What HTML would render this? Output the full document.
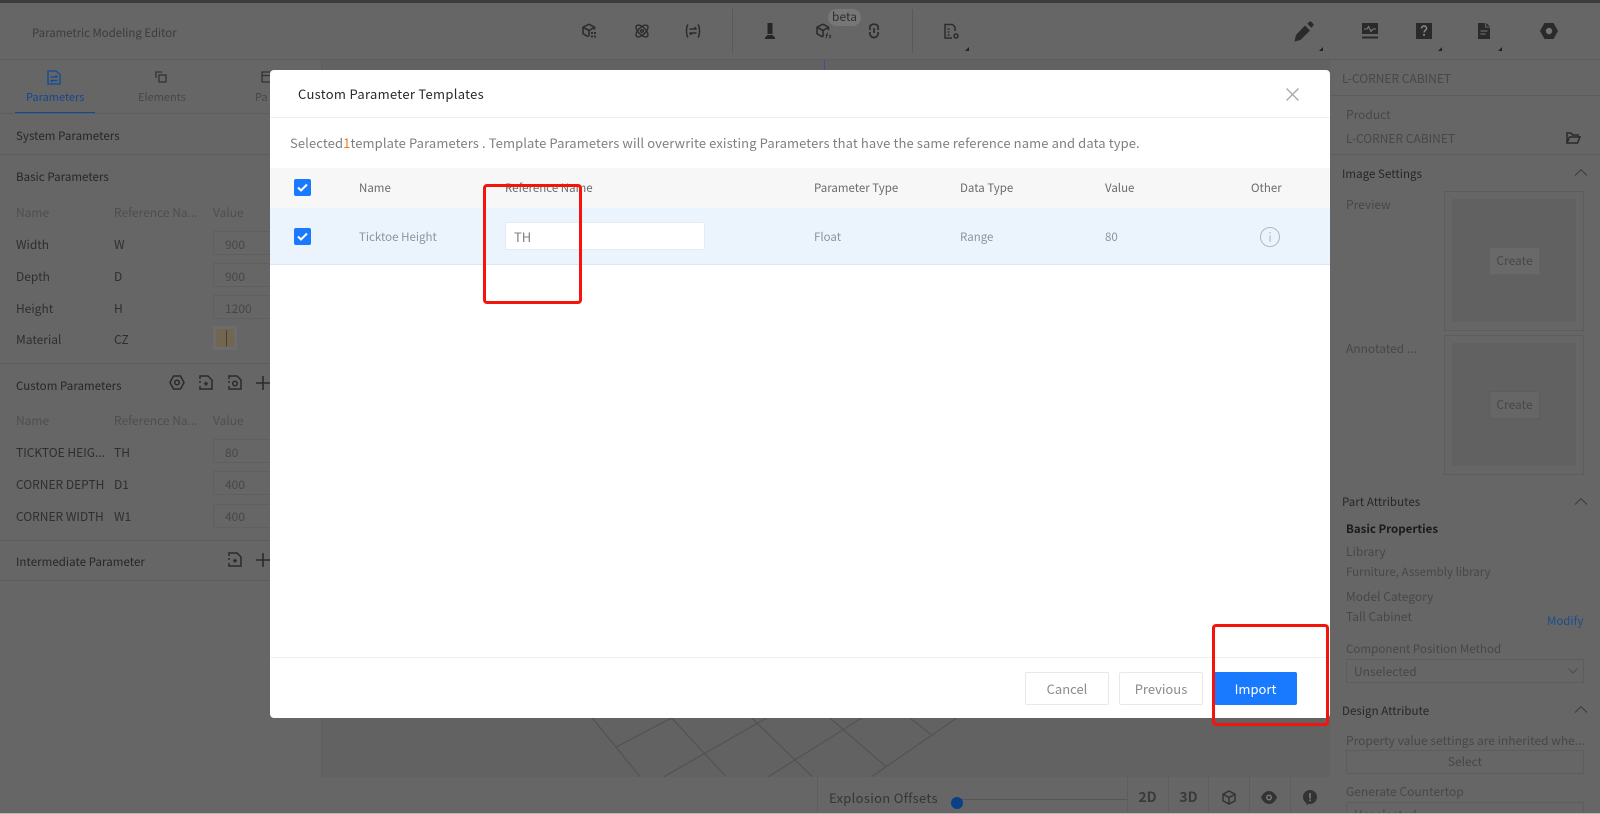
<!DOCTYPE html>
<html><head><meta charset="utf-8"><title>Custom Parameter Templates</title>
<style>
html,body{margin:0;padding:0;width:1600px;height:814px;overflow:hidden;background:#626262}
body{position:relative;font-family:"Noto Sans CJK SC","Liberation Sans",sans-serif;font-size:12px;color:#2e2e2e}
.a{position:absolute}
.t{position:absolute;line-height:20px;height:20px;white-space:nowrap;margin-top:1px}
.h{font-size:11.5px;color:#262626;letter-spacing:.05px}
.g{color:#474747}
.l{position:absolute;height:1px;background:#5d5d5d}
.v{position:absolute;width:1px;background:#595959}
.in{position:absolute;left:213px;width:60px;height:22px;border:1px solid #5f5f5f;border-radius:2px}
.box{position:absolute;border:1px solid #5d5d5d;box-sizing:border-box}
svg{position:absolute;overflow:visible}
.btn{position:absolute;box-sizing:border-box;border:1px solid #e8e8e8;border-radius:2px;background:#fff;color:#8a8a8a;font-size:13px;text-align:center;line-height:32px;height:33px;top:672px}
.m{color:#7f7f7f;font-size:11.5px;margin-top:0}
.z{margin-top:0}
.tri{position:absolute;width:0;height:0;border-left:4px solid transparent;border-bottom:4px solid #222}
</style></head><body>
<div class="a" style="left:0;top:0;width:1600px;height:3px;background:#3b3b40"></div>
<div class="a" style="left:0;top:3px;width:1600px;height:57px;background:#666"></div>
<div class="l" style="left:0;top:59px;width:1600px"></div>
<div class="t" style="left:32px;top:22px;font-size:11.4px;color:#3c3c3c">Parametric Modeling Editor</div>

<div class="a" style="left:824px;top:60px;width:1px;height:12px;background:#4a4a92"></div>
<div class="v" style="left:732px;top:9px;height:44px"></div>
<div class="v" style="left:912px;top:9px;height:44px"></div>

<svg style="left:581px;top:23px" width="16" height="16" viewBox="0 0 16 16" fill="none" stroke="#2c2c2c" stroke-width="1.6"><path d="M8 1.200 2 4.200v6.500l5 3M8 1.200l5.500 3v2.600M2.300 4.500 8 7.500l5-3M8 7.500v6"/><path d="M10 9h2v2h-2zM13 9h2v2h-2zM10 12.500h2v2h-2zM13 12.500h2v2h-2z" fill="#2c2c2c" stroke="none"/></svg>
<svg style="left:634px;top:23px" width="16" height="16" viewBox="0 0 16 16" fill="none" stroke="#2c2c2c" stroke-width="1.400"><ellipse cx="8" cy="8" rx="3.600" ry="7.600" transform="rotate(45 8 8)"/><ellipse cx="8" cy="8" rx="3.600" ry="7.600" transform="rotate(-45 8 8)"/><circle cx="8" cy="8" r="1.300"/></svg>
<svg style="left:685px;top:23px" width="16" height="16" viewBox="0 0 16 16" fill="none" stroke="#2c2c2c" stroke-width="1.500"><path d="M3 1.500C1 4 1 12 3 14.500M13 1.500c2 2.500 2 10.500 0 13M4.500 6h7M9.500 4l2 2M11.500 10h-7M6.500 12l-2-2"/></svg>
<svg style="left:762px;top:22px" width="16" height="18" viewBox="0 0 16 18"><path d="M5.500 1h5v11H5.500zM5.500 13h5l2.500 2.500V17H3v-1.500z" fill="#262626"/></svg>

<div class="a" style="left:828px;top:9px;width:33px;height:17px;border-radius:9px;background:#777;color:#2e2e2e;text-align:center;line-height:16px;font-size:12px">beta</div>
<svg style="left:815px;top:23px" width="17" height="17" viewBox="0 0 17 17" fill="none" stroke="#2c2c2c" stroke-width="1.600"><path d="M8 1.200 2 4.200v6.500l5.500 3.300M8 1.200l5.500 3v3M2.300 4.500 8 7.500l5-3M8 7.500v6.500"/><path d="M10.500 15c1.500 0 .8-5 2.500-5M10.500 12h2.500M14 12l2 3M16 12l-2 3" stroke-width=".9"/></svg>
<svg style="left:866px;top:22px" width="16" height="18" viewBox="0 0 16 18" fill="none" stroke="#2c2c2c" stroke-width="1.700"><path d="M6 2.500C4 3 3.800 5 3.800 6.500M10 2.500c2 .5 2.200 2.500 2.200 4M3.800 11c0 2.500 1.700 4.500 4.200 4.500s4.200-2 4.200-4.500M8 6v5M3.800 6.500v1.500M12.200 6.500v1.500M3.800 10v1.500M12.200 10v1.500M6 2.300h4"/></svg>
<svg style="left:943px;top:23px" width="17" height="17" viewBox="0 0 17 17" fill="none" stroke="#2c2c2c" stroke-width="1.500"><path d="M9 15H2V1.500h7.500L12 4v4"/><path d="M4.500 6h2M4.500 9h2M4.500 12h2"/><circle cx="13" cy="13" r="2"/></svg>
<div class="tri" style="left:965px;top:47px"></div>

<svg style="left:1293px;top:21px" width="22" height="22" viewBox="0 0 22 22"><path d="M1.500 20.500l1.500-6.500L12 4.500l5 5-9.500 9.500z" fill="#2a2a2a"/><path d="M14.300 2.800l2-2c.6-.6 1.300-.6 1.900 0l2 2c.6.6.6 1.300 0 1.900l-2 2z" fill="#2a2a2a"/></svg>
<div class="tri" style="left:1319px;top:47px"></div>
<svg style="left:1362px;top:23px" width="16" height="17" viewBox="0 0 16 17"><path d="M0 0h16v11H0z" fill="#2a2a2a"/><path d="M0 13.500h16v2H0z" fill="#2a2a2a"/><path d="M2 6h3l1.500-2.500 2.500 5L11 6h3" fill="none" stroke="#7a7a7a" stroke-width="1.100"/></svg>
<svg style="left:1416px;top:23px" width="16" height="16" viewBox="0 0 16 16"><path d="M0 0h16v16H0z" fill="#2a2a2a"/><path d="M5.500 5.500C5.500 3.800 6.800 3 8 3s2.600.8 2.600 2.300C10.600 7.300 8 7.300 8 9.500" fill="none" stroke="#8a8a8a" stroke-width="1.500"/><rect x="7.200" y="11" width="1.700" height="1.800" fill="#8a8a8a"/></svg>
<div class="tri" style="left:1438px;top:47px"></div>
<svg style="left:1478px;top:23px" width="12" height="16" viewBox="0 0 12 16"><path d="M0 0h7v4.500h5V16H0z" fill="#2a2a2a"/><path d="M8 0l4 3.500H8z" fill="#2a2a2a"/><path d="M2.500 8h7M2.500 11h5" stroke="#777" stroke-width="1"/></svg>
<div class="tri" style="left:1498px;top:47px"></div>
<svg style="left:1540px;top:23px" width="18" height="16" viewBox="0 0 18 16"><path d="M4.500 0h9L18 8l-4.500 8h-9L0 8z" fill="#2a2a2a"/><circle cx="9" cy="8" r="3.200" fill="#747474"/></svg>

<!-- left panel -->
<div class="a" style="left:0;top:60px;width:322px;height:754px;background:#666"></div>
<div class="v" style="left:321px;top:60px;height:717px;background:#5e5e5e"></div>
<svg style="left:47px;top:70px" width="14" height="15" viewBox="0 0 14 15" fill="none" stroke="#0f4a99" stroke-width="1.300"><path d="M1 1h8l4 3.500V14H1z"/><path d="M3.500 7h7M8.500 5.500 10.500 7M10.500 10.500h-7M5.500 12l-2-1.500"/></svg>
<svg style="left:155px;top:71px" width="12" height="12" viewBox="0 0 12 12" fill="none" stroke="#333" stroke-width="1.300"><path d="M1 7V1h6"/><rect x="4" y="4" width="7" height="7"/></svg>
<svg style="left:261px;top:71px" width="9" height="12" viewBox="0 0 9 12" fill="none" stroke="#333" stroke-width="1.300"><path d="M9 1H1v10h8M1 4.500h8"/></svg>
<div class="t z" style="left:26px;top:87px;color:#12478f;font-size:11px">Parameters</div>
<div class="t g z" style="left:138px;top:87px;font-size:11px">Elements</div>
<div class="t g z" style="left:255px;top:87px;font-size:11px">Pa</div>
<div class="a" style="left:15px;top:112px;width:80px;height:2px;background:#0f4a99"></div>
<div class="l" style="left:0;top:113px;width:322px"></div>
<div class="t h" style="left:16px;top:125px">System Parameters</div>
<div class="l" style="left:0;top:154px;width:322px"></div>
<div class="t h" style="left:16px;top:166px">Basic Parameters</div>
<div class="t" style="left:16px;top:202px;color:#4e4e4e">Name</div>
<div class="t" style="left:114px;top:202px;color:#4e4e4e">Reference Na...</div>
<div class="t" style="left:213px;top:202px;color:#4e4e4e">Value</div>
<div class="t" style="left:16px;top:234px">Width</div><div class="t" style="left:114px;top:234px">W</div><div class="in" style="top:231px"></div><div class="t g" style="left:225px;top:234px">900</div>
<div class="t" style="left:16px;top:266px">Depth</div><div class="t" style="left:114px;top:266px">D</div><div class="in" style="top:263px"></div><div class="t g" style="left:225px;top:266px">900</div>
<div class="t" style="left:16px;top:298px">Height</div><div class="t" style="left:114px;top:298px">H</div><div class="in" style="top:295px"></div><div class="t g" style="left:225px;top:298px">1200</div>
<div class="t" style="left:16px;top:329px">Material</div><div class="t" style="left:114px;top:329px">CZ</div>
<div class="box" style="left:213px;top:326px;width:24px;height:24px;background:#736650;border:3px solid #6c6c6c"></div>
<div class="a" style="left:226px;top:330px;width:1px;height:16px;background:#4a3f2e"></div>
<div class="l" style="left:0;top:363px;width:322px"></div>
<div class="t h" style="left:16px;top:375px">Custom Parameters</div>
<svg style="left:169px;top:375px" width="16" height="15" viewBox="0 0 16 15" fill="none" stroke="#2a2a2a" stroke-width="1.500"><path d="M4.500 1h7L15 7.500 11.500 14h-7L1 7.500z"/><circle cx="8" cy="7.500" r="2.300"/></svg>
<svg style="left:199px;top:375px" width="14" height="15" viewBox="0 0 14 15" fill="none" stroke="#2a2a2a" stroke-width="1.500"><path d="M1 4V1h8l4 4v9H1v-3M1 6v2"/><path d="M7 6l.8 1.700 1.700.2-1.300 1.200.4 1.800L7 10l-1.600.9.4-1.800L4.500 7.900l1.700-.2z" fill="#2a2a2a" stroke="none"/></svg>
<svg style="left:228px;top:375px" width="14" height="15" viewBox="0 0 14 15" fill="none" stroke="#2a2a2a" stroke-width="1.500"><path d="M1 4V1h8l4 4v9H1v-3M1 6v2"/><circle cx="7" cy="8.500" r="2.300"/></svg>
<svg style="left:256px;top:376px" width="14" height="14" viewBox="0 0 14 14" stroke="#2a2a2a" stroke-width="1.600"><path d="M0 7h14M7 0v14"/></svg>
<div class="t" style="left:16px;top:410px;color:#4e4e4e">Name</div>
<div class="t" style="left:114px;top:410px;color:#4e4e4e">Reference Na...</div>
<div class="t" style="left:213px;top:410px;color:#4e4e4e">Value</div>
<div class="t" style="left:16px;top:442px">TICKTOE HEIG...</div><div class="t" style="left:114px;top:442px">TH</div><div class="in" style="top:439px"></div><div class="t g" style="left:225px;top:442px">80</div>
<div class="t" style="left:16px;top:474px">CORNER DEPTH</div><div class="t" style="left:114px;top:474px">D1</div><div class="in" style="top:471px"></div><div class="t g" style="left:225px;top:474px">400</div>
<div class="t" style="left:16px;top:506px">CORNER WIDTH</div><div class="t" style="left:114px;top:506px">W1</div><div class="in" style="top:504px"></div><div class="t g" style="left:225px;top:506px">400</div>
<div class="l" style="left:0;top:540px;width:322px"></div>
<div class="t h" style="left:16px;top:551px">Intermediate Parameter</div>
<svg style="left:228px;top:552px" width="14" height="15" viewBox="0 0 14 15" fill="none" stroke="#2a2a2a" stroke-width="1.500"><path d="M1 4V1h8l4 4v9H1v-3M1 6v2"/><path d="M7 6l.8 1.700 1.700.2-1.300 1.200.4 1.800L7 10l-1.600.9.4-1.800L4.500 7.900l1.700-.2z" fill="#2a2a2a" stroke="none"/></svg>
<svg style="left:256px;top:553px" width="14" height="14" viewBox="0 0 14 14" stroke="#2a2a2a" stroke-width="1.600"><path d="M0 7h14M7 0v14"/></svg>
<div class="l" style="left:0;top:580px;width:322px"></div>

<!-- canvas grid -->
<svg style="left:560px;top:700px" width="500" height="77" viewBox="0 0 1500 231" fill="none" stroke="#505050" stroke-width="3">
<path d="M97 54 240 230M170 140 335 54M335 54 498 230M312 230 620 54M575 54 757 230M625 230 905 54M810 54 978 200M935 230 1190 54M1050 54 1115 105"/></svg>

<!-- bottom toolbar -->
<div class="a" style="left:322px;top:777px;width:1008px;height:36px;background:#666"></div>
<div class="v" style="left:817px;top:777px;height:36px;background:#5e5e5e"></div>
<div class="t z" style="left:829px;top:788px;font-size:13px;color:#353535;letter-spacing:.3px">Explosion Offsets</div>
<div class="a" style="left:957px;top:799px;width:170px;height:1px;background:#565656"></div>
<div class="a" style="left:951px;top:797px;width:12px;height:12px;border-radius:50%;background:#0b3f86"></div>
<div class="v" style="left:1127px;top:777px;height:36px;background:#5e5e5e"></div><div class="v" style="left:1168px;top:777px;height:36px;background:#5e5e5e"></div><div class="v" style="left:1208px;top:777px;height:36px;background:#5e5e5e"></div><div class="v" style="left:1249px;top:777px;height:36px;background:#5e5e5e"></div><div class="v" style="left:1290px;top:777px;height:36px;background:#5e5e5e"></div>
<div class="t z" style="left:1127px;width:41px;top:787px;text-align:center;font-size:14px;font-weight:700;color:#3a3a3a">2D</div>
<div class="t z" style="left:1168px;width:41px;top:787px;text-align:center;font-size:14px;font-weight:700;color:#3a3a3a">3D</div>
<svg style="left:1222px;top:790px" width="14" height="15" viewBox="0 0 14 15" fill="none" stroke="#333" stroke-width="1.500"><path d="M7 1 1 4.200v6.600L7 14l6-3.200V4.200zM1.300 4.400 7 7.500l5.700-3.100M7 7.500V14"/></svg>
<svg style="left:1261px;top:791px" width="16" height="13" viewBox="0 0 16 13"><path d="M0 6.500C2 2 5 0 8 0s6 2 8 6.500C14 11 11 13 8 13s-6-2-8-6.500z" fill="#333"/><circle cx="8" cy="6.500" r="3" fill="#777"/><circle cx="8" cy="6.500" r="1.500" fill="#333"/></svg>
<svg style="left:1303px;top:790px" width="14" height="15" viewBox="0 0 14 15"><circle cx="7" cy="7" r="7" fill="#333"/><path d="M4 12l-1 3 4-1.500z" fill="#333"/><rect x="6.200" y="3" width="1.600" height="5.500" fill="#777"/><rect x="6.200" y="9.500" width="1.600" height="1.700" fill="#777"/></svg>

<!-- right panel -->
<div class="a" style="left:1330px;top:60px;width:270px;height:753px;background:#666"></div>
<div class="t g" style="left:1342px;top:68px">L-CORNER CABINET</div>
<div class="l" style="left:1330px;top:95px;width:270px"></div>
<div class="t g" style="left:1346px;top:104px">Product</div>
<div class="t g" style="left:1346px;top:128px">L-CORNER CABINET</div>
<svg style="left:1566px;top:132px" width="14" height="12" viewBox="0 0 14 12" fill="none" stroke="#2a2a2a" stroke-width="1.500"><path d="M1 11V1h4l1.500 2H12v2M1 11l2.500-6H14l-2.500 6z"/></svg>
<div class="l" style="left:1330px;top:154px;width:270px"></div>
<div class="t h" style="left:1342px;top:163px">Image Settings</div>
<svg style="left:1575px;top:169px" width="12" height="7" viewBox="0 0 12 7" fill="none" stroke="#3a3a3a" stroke-width="1"><path d="M0 6.500 6 .7l6 5.800"/></svg>
<div class="t g" style="left:1346px;top:194px">Preview</div>
<div class="box" style="left:1444px;top:191px;width:140px;height:140px"></div>
<div class="a" style="left:1452px;top:199px;width:124px;height:123px;background:#616161"></div>
<div class="box" style="left:1489px;top:247px;width:51px;height:28px;background:#696969;border-color:#636363;text-align:center;line-height:26px;color:#474747">Create</div>
<div class="t g" style="left:1346px;top:338px">Annotated ...</div>
<div class="box" style="left:1444px;top:335px;width:140px;height:140px"></div>
<div class="a" style="left:1452px;top:343px;width:124px;height:123px;background:#616161"></div>
<div class="box" style="left:1489px;top:391px;width:51px;height:28px;background:#666;border-color:#5d5d5d;text-align:center;line-height:26px;color:#474747">Create</div>
<div class="t h" style="left:1342px;top:491px">Part Attributes</div>
<svg style="left:1575px;top:498px" width="12" height="7" viewBox="0 0 12 7" fill="none" stroke="#3a3a3a" stroke-width="1"><path d="M0 6.500 6 .7l6 5.800"/></svg>
<div class="t" style="left:1346px;top:518px;font-weight:700;color:#1a1a1a;font-size:11.5px">Basic Properties</div>
<div class="t g" style="left:1346px;top:541px">Library</div>
<div class="t g" style="left:1346px;top:561px;font-size:11.5px">Furniture, Assembly library</div>
<div class="t g" style="left:1346px;top:586px">Model Category</div>
<div class="t g" style="left:1346px;top:606px">Tall Cabinet</div>
<div class="t" style="left:1547px;top:610px;color:#1c4c8f;font-size:11.5px">Modify</div>
<div class="t g" style="left:1346px;top:638px;font-size:11.6px">Component Position Method</div>
<div class="box" style="left:1346px;top:659px;width:238px;height:24px"></div>
<div class="t g" style="left:1354px;top:661px">Unselected</div>
<svg style="left:1568px;top:668px" width="10" height="6" viewBox="0 0 10 6" fill="none" stroke="#4c4c4c"><path d="M.5.500 5 5 9.500.5"/></svg>
<div class="t h" style="left:1342px;top:700px">Design Attribute</div>
<svg style="left:1575px;top:706px" width="12" height="7" viewBox="0 0 12 7" fill="none" stroke="#3a3a3a" stroke-width="1"><path d="M0 6.500 6 .7l6 5.800"/></svg>
<div class="t g" style="left:1346px;top:730px">Property value settings are inherited whe...</div>
<div class="box" style="left:1346px;top:750px;width:238px;height:24px;text-align:center;line-height:22px;color:#474747">Select</div>
<div class="t g" style="left:1346px;top:781px">Generate Countertop</div>
<div class="box" style="left:1346px;top:802px;width:238px;height:24px"></div>
<div class="t g" style="left:1354px;top:804px">Unselected</div>
<div class="a" style="left:0;top:813px;width:1600px;height:1px;background:#b5b5b5"></div>

<!-- modal -->
<div class="a" style="left:270px;top:70px;width:1060px;height:648px;background:#fff;border-radius:4px"></div>
<div class="t z" style="left:298px;top:84px;font-size:13px;color:#2a2a2a;letter-spacing:.3px">Custom Parameter Templates</div>
<svg style="left:1286px;top:88px" width="13" height="13" viewBox="0 0 13 13" stroke="#a8a8a8" stroke-width="1.300"><path d="M.5.500l12 12M12.500.500l-12 12"/></svg>
<div class="a" style="left:270px;top:117px;width:1060px;height:1px;background:#f0f0f0"></div>
<div class="t z" style="left:290px;top:133px;font-size:13px;color:#808080;letter-spacing:.1px">Selected<span style="color:#f07a1a">1</span>template Parameters . Template Parameters will overwrite existing Parameters that have the same reference name and data type.</div>

<div class="a" style="left:270px;top:168px;width:1060px;height:40px;background:#f7f7f7"></div>
<div class="a" style="left:270px;top:208px;width:1060px;height:56px;background:#ebf3fd;border-bottom:1px solid #dde7f3"></div>
<div class="a" style="left:294px;top:179px;width:17px;height:17px;background:#1a7aff;border-radius:2px"></div>
<svg style="left:297px;top:183px" width="11" height="9" viewBox="0 0 11 9" fill="none" stroke="#fff" stroke-width="2"><path d="M1 4.500 4 7.500l6-6"/></svg>
<div class="a" style="left:294px;top:228px;width:17px;height:17px;background:#1a7aff;border-radius:2px"></div>
<svg style="left:297px;top:232px" width="11" height="9" viewBox="0 0 11 9" fill="none" stroke="#fff" stroke-width="2"><path d="M1 4.500 4 7.500l6-6"/></svg>
<div class="t m" style="left:359px;top:178px;color:#6b6b6b">Name</div>
<div class="t m" style="left:505px;top:178px;color:#6b6b6b">Reference Name</div>
<div class="t m" style="left:814px;top:178px;color:#6b6b6b">Parameter Type</div>
<div class="t m" style="left:960px;top:178px;color:#6b6b6b">Data Type</div>
<div class="t m" style="left:1105px;top:178px;color:#6b6b6b">Value</div>
<div class="t m" style="left:1251px;top:178px;color:#6b6b6b">Other</div>
<div class="t m" style="left:359px;top:227px;color:#8d949c">Ticktoe Height</div>
<div class="a" style="left:505px;top:222px;width:200px;height:28px;box-sizing:border-box;background:#fff;border:1px solid #e6ebf2;border-radius:2px"></div>
<div class="t m" style="left:514px;top:227px;font-size:13px">TH</div>
<div class="t m" style="left:814px;top:227px;color:#8d949c">Float</div>
<div class="t m" style="left:960px;top:227px;color:#8d949c">Range</div>
<div class="t m" style="left:1105px;top:227px;color:#8d949c">80</div>
<svg style="left:1260px;top:227px" width="20" height="20" viewBox="0 0 20 20" fill="none" stroke="#b0b8c2"><circle cx="10" cy="10" r="9.500"/><path d="M10 8.500V15M10 5v1.500" stroke-width="1.200"/></svg>

<div class="a" style="left:270px;top:657px;width:1060px;height:1px;background:#f0f0f0"></div>
<div class="btn" style="left:1025px;width:84px">Cancel</div>
<div class="btn" style="left:1119px;width:84px">Previous</div>
<div class="btn" style="left:1214px;width:83px;background:#1a7aff;border-color:#1a7aff;color:#fff">Import</div>

<!-- red annotations -->
<div class="a" style="left:483px;top:184px;width:99px;height:120px;box-sizing:border-box;border:3px solid #f5140c;border-radius:4px"></div>
<div class="a" style="left:1212px;top:624px;width:117px;height:102px;box-sizing:border-box;border:3px solid #f5140c;border-radius:4px"></div>
</body></html>
